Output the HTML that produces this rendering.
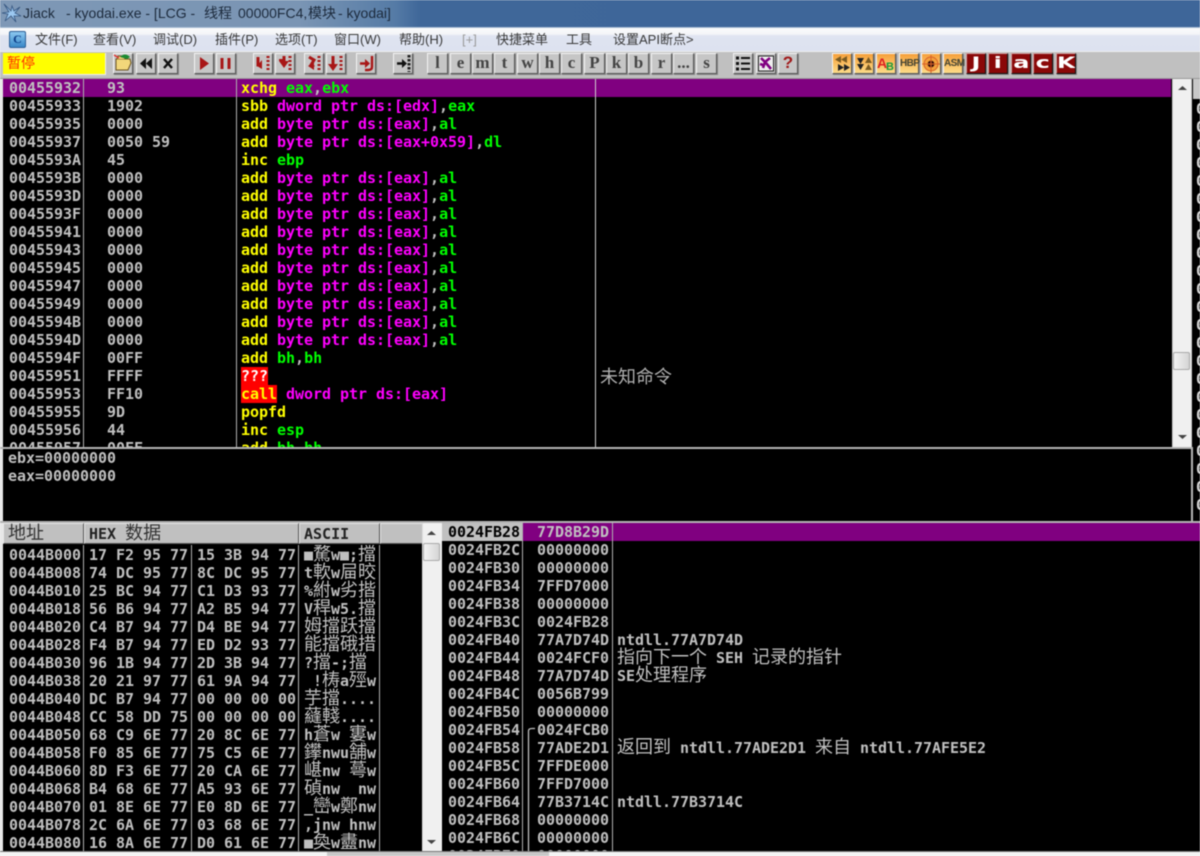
<!DOCTYPE html>
<html><head><meta charset="utf-8"><style>
*{margin:0;padding:0;box-sizing:border-box}
html,body{width:1200px;height:856px;overflow:hidden;background:#f0f0f0}
#w{position:absolute;left:0;top:0;width:1200px;height:856px;overflow:hidden;filter:blur(.45px)}
.a{position:absolute}
pre{position:absolute;font:bold 15px/18px "DejaVu Sans Mono","Liberation Mono",monospace;letter-spacing:-.03px;color:#c0c0c0;white-space:pre}
pre i{font:normal 18px/0 "Noto Sans CJK SC",sans-serif;letter-spacing:0}
.y{color:#ff0}.g{color:#0f0}.m{color:#f0f}
.t{position:absolute;top:3px;font:14px/20px "Liberation Sans","Noto Sans CJK SC",sans-serif;color:#1c2a3c;white-space:pre}
.n{position:absolute;top:31px;font:13px/18px "Liberation Sans","Noto Sans CJK SC",sans-serif;color:#3a3a3a;white-space:pre}
.b{position:absolute;top:53px;height:21px;background:#c6c6c6;border:1px solid;border-color:#f4f4f4 #555 #555 #f4f4f4;box-shadow:1px 1px 0 #888}
.l{width:21px;text-align:center;font:bold 17px/18px "Liberation Serif",serif;color:#444}
.o{width:20px;background:linear-gradient(#f6a03a,#fddc88);text-align:center;font:bold 10px/19px "Liberation Sans",sans-serif;letter-spacing:-.6px;color:#443}
.r{width:20px;background:#8a0808;border-color:#d0a0a0 #111 #111 #d0a0a0;text-align:center;font:900 16px/17px "DejaVu Sans",sans-serif;color:#fff;overflow:hidden}
.r span{display:inline-block;transform:scaleX(1.5)}
.h{position:absolute;top:523px;height:21px;background:#c0c0c0;border:1px solid;border-color:#e8e8e8 #555 #555 #e8e8e8;font:bold 15px/21px "DejaVu Sans Mono",monospace;color:#222;padding-left:4px;white-space:pre}
.h i{font:normal 18px/0 "Noto Sans CJK SC",sans-serif;color:#333}
.v{position:absolute;width:1px;background:#b0b0b0}
.c{font:normal 18px/18px "Noto Sans CJK SC",sans-serif;color:#b0b0b0;position:absolute;white-space:pre}
</style></head><body><div id="w">

<div class="a" style="left:0;top:0;width:1200px;height:27px;background:linear-gradient(90deg,#7e98b6 0,#7a95b4 300px,#557ba6 395px,#3f6799 420px,#3e6699 1200px)"></div>
<div class="a" style="left:0;top:27px;width:1200px;height:1px;background:#a8bdd4"></div>
<svg class="a" style="left:1px;top:2px" width="22" height="22" viewBox="0 0 22 22"><path d="M3 2 L10 9 L11 4 L13 9 L19 5 L14 11 L20 14 L13 14 L15 20 L10 14 L4 19 L7 12 L1 11 L8 10Z" fill="#9cc8f0" stroke="#35557f" stroke-width=".8"/></svg>
<div class="t" style="left:23px">Jiack</div>
<div class="t" style="left:66px">- kyodai.exe - [LCG -</div>
<div class="t" style="left:204px">线程</div>
<div class="t" style="left:238px">00000FC4,</div>
<div class="t" style="left:308px">模块</div>
<div class="t" style="left:338px">- kyodai]</div>

<div class="a" style="left:0;top:28px;width:1200px;height:23px;background:linear-gradient(#fbfbfc 0,#f4f5f8 6px,#dfe4f1 8px,#dde2f0 100%)"></div>
<div class="a" style="left:9px;top:31px;width:17px;height:17px;background:linear-gradient(#8cc8f0,#3a88c8);border:1px solid #2b5f96;border-radius:2px;color:#0d3f88;font:bold 12px/15px 'Liberation Serif',serif;text-align:center">C</div>
<div class="n" style="left:35px">文件(F)</div>
<div class="n" style="left:93px">查看(V)</div>
<div class="n" style="left:153px">调试(D)</div>
<div class="n" style="left:215px">插件(P)</div>
<div class="n" style="left:275px">选项(T)</div>
<div class="n" style="left:334px">窗口(W)</div>
<div class="n" style="left:399px">帮助(H)</div>
<div class="n" style="left:462px;color:#9a9a9a">[+]</div>
<div class="n" style="left:496px">快捷菜单</div>
<div class="n" style="left:566px">工具</div>
<div class="n" style="left:613px">设置API断点&gt;</div>

<div class="a" style="left:0;top:51px;width:1200px;height:28px;background:#c0c0c0;border-top:1px solid #eee"></div>
<div class="a" style="left:3px;top:53px;width:103px;height:22px;background:#ff0;border-right:1px solid #eee;border-bottom:1px solid #eee;color:#ff3000;font:14px/20px 'Noto Sans CJK SC',sans-serif;padding-left:4px">暂停</div>

<div class="b" style="left:113px;width:20px"></div>
<div class="b" style="left:136px;width:20px"></div>
<div class="b" style="left:158px;width:20px"></div>
<div class="b" style="left:194px;width:20px"></div>
<div class="b" style="left:216px;width:20px"></div>
<div class="b" style="left:253px;width:20px"></div>
<div class="b" style="left:275px;width:20px"></div>
<div class="b" style="left:304px;width:20px"></div>
<div class="b" style="left:326px;width:20px"></div>
<div class="b" style="left:356px;width:20px"></div>
<div class="b" style="left:393px;width:20px"></div>
<div class="b l" style="left:427px">l</div>
<div class="b l" style="left:450px">e</div>
<div class="b l" style="left:472px">m</div>
<div class="b l" style="left:494px">t</div>
<div class="b l" style="left:517px">w</div>
<div class="b l" style="left:539px">h</div>
<div class="b l" style="left:561px">c</div>
<div class="b l" style="left:584px">P</div>
<div class="b l" style="left:606px">k</div>
<div class="b l" style="left:628px">b</div>
<div class="b l" style="left:651px">r</div>
<div class="b l" style="left:673px">...</div>
<div class="b l" style="left:696px">s</div>
<div class="b" style="left:733px;width:20px"></div>
<div class="b" style="left:756px;width:20px"></div>
<div class="b l" style="left:778px;width:20px;color:#a01818;font:bold 17px/18px 'Liberation Sans',sans-serif">?</div>
<div class="b o" style="left:832px"></div>
<div class="b o" style="left:854px"></div>
<div class="b o" style="left:876px;font-size:14px;letter-spacing:0;color:#d22;text-align:left">A</div>
<div class="b o" style="left:899px">HBP</div>
<div class="b o" style="left:921px"></div>
<div class="b o" style="left:943px">ASM</div>
<div class="b r" style="left:966px"><span>J</span></div>
<div class="b r" style="left:988px"><span>i</span></div>
<div class="b r" style="left:1011px"><span>a</span></div>
<div class="b r" style="left:1033px"><span>c</span></div>
<div class="b r" style="left:1056px"><span>K</span></div>

<svg class="a" style="left:0;top:49px" width="1200" height="28" viewBox="0 50 1200 28">
<path d="M116 60 L130 60 L131 64 L128 71 L116 71Z" fill="#f2d77a" stroke="#6b5420"/>
<path d="M117 60 L118 57 L124 57 L125 60" fill="#f2d77a" stroke="#6b5420"/>
<path d="M120 58 Q125 53 130 58 L127 60Z" fill="#1b8a30"/><path d="M114 56 L119 59" stroke="#d33" stroke-width="1.4"/>
<path d="M146 59 V70 L140 64.500Z M152 59 V70 L146 64.500Z" fill="#111"/>
<path d="M164 60 L172 69 M172 60 L164 69" stroke="#111" stroke-width="2.400"/>
<path d="M200 58 V71 L209 64.500Z" fill="#a81616"/>
<path d="M222 59 V70 M229 59 V70" stroke="#a81616" stroke-width="3"/>
<g fill="none" stroke="#a81616">
<path d="M258 58 V66 H262" stroke-width="3"/><path d="M262 61 V70 L257 67 Z" fill="#a81616" stroke="none"/>
<path d="M268 57 V72" stroke-width="3" stroke-dasharray="2 2"/>
<path d="M284 57 V64" stroke-width="3"/><path d="M279 62 H289 L284 69Z" fill="#a81616" stroke="none"/><path d="M279 61 H284" stroke-width="2"/>
<path d="M290 57 V72" stroke-width="3" stroke-dasharray="2 2"/>
<path d="M309 58 L314 61 L311 66 L314 68" stroke-width="3"/><path d="M308 67 L314 63 V71Z" fill="#a81616" stroke="none"/>
<path d="M319 57 V72" stroke-width="3" stroke-dasharray="2 2"/>
<path d="M333 57 V67" stroke-width="3"/><path d="M328 65 H338 L333 72Z" fill="#a81616" stroke="none"/>
<path d="M341 57 V72" stroke-width="3" stroke-dasharray="2 2"/>
<path d="M360 64.500 H366" stroke-width="2.500"/><path d="M365 60 L370 64.500 L365 69Z" fill="#a81616" stroke="none"/>
<path d="M372 57 V68 Q372 71 368 71 H365" stroke-width="2.400"/>
</g>
<path d="M397 64.500 H403" stroke="#111" stroke-width="2.500"/><path d="M402 60 L407 64.500 L402 69Z" fill="#111"/>
<path d="M409 56 V73" stroke="#222" stroke-width="3" stroke-dasharray="2.500 1.500"/>
<path d="M736 59 H739 M736 64.500 H739 M736 70 H739" stroke="#111" stroke-width="3"/><path d="M741 59 H750 M741 64.500 H750 M741 70 H750" stroke="#111" stroke-width="2"/>
<rect x="758.500" y="57" width="15" height="15" fill="#eee" stroke="#222"/>
<path d="M761 59 L765 63 L770 59 M765 63 L763 69 M766 64 L771 70 M760 65 L763 66" stroke="#800080" stroke-width="2.600" fill="none"/>
<path d="M841 57 V64 L835 60.500Z M847 57 V64 L841 60.500Z" fill="#7a5b22"/><path d="M838 65 V72 L844 68.500Z M844 65 V72 L850 68.500Z" fill="#222"/>
<path d="M857 59 H864 L860.500 65Z M857 65 H864 L860.500 71Z" fill="#222"/><path d="M865 64 H872 L868.500 58Z M865 71 H872 L868.500 65Z" fill="#7a5b22"/>
<circle cx="931" cy="65" r="7" fill="#f3a03b" stroke="#d8622a"/><circle cx="931" cy="65" r="3.400" fill="#3a100a"/><path d="M931 56 V74 M922 65 H940" stroke="#d8622a"/>
</svg>
<div class="a" style="left:886px;top:62px;color:#1a9a3a;font:bold 11px/11px 'Liberation Sans',sans-serif">B</div>

<div class="a" style="left:0;top:78px;width:1200px;height:1px;background:#999"></div>
<div class="a" style="left:0;top:79px;width:3px;height:777px;background:#e8e8e8"></div>
<div class="a" style="left:3px;top:79px;width:1197px;height:773px;background:#000"></div>

<!-- CPU pane -->
<div class="a" style="left:3px;top:79px;width:1168px;height:18px;background:#800080"></div>
<div class="v" style="left:83px;top:79px;height:368px"></div>
<div class="v" style="left:236px;top:79px;height:368px"></div>
<div class="v" style="left:595px;top:79px;height:368px;background:#d0d0d0"></div>
<div class="a" style="left:241px;top:367px;width:27px;height:18px;background:#f00"></div>
<div class="a" style="left:241px;top:385px;width:36px;height:18px;background:#f00"></div>
<div class="a" style="left:0;top:79px;width:1171px;height:368px;overflow:hidden">
<pre style="left:9px;top:0">00455932
00455933
00455935
00455937
0045593A
0045593B
0045593D
0045593F
00455941
00455943
00455945
00455947
00455949
0045594B
0045594D
0045594F
00455951
00455953
00455955
00455956
00455957</pre>
<pre style="left:107px;top:0">93
1902
0000
0050 59
45
0000
0000
0000
0000
0000
0000
0000
0000
0000
0000
00FF
FFFF
FF10
9D
44
00FF</pre>
<pre style="left:241px;top:0"><span class="y">xchg</span> <span class="g">eax</span>,<span class="g">ebx</span>
<span class="y">sbb</span> <span class="m">dword ptr ds:[edx]</span>,<span class="g">eax</span>
<span class="y">add</span> <span class="m">byte ptr ds:[eax]</span>,<span class="g">al</span>
<span class="y">add</span> <span class="m">byte ptr ds:[eax+0x59]</span>,<span class="g">dl</span>
<span class="y">inc</span> <span class="g">ebp</span>
<span class="y">add</span> <span class="m">byte ptr ds:[eax]</span>,<span class="g">al</span>
<span class="y">add</span> <span class="m">byte ptr ds:[eax]</span>,<span class="g">al</span>
<span class="y">add</span> <span class="m">byte ptr ds:[eax]</span>,<span class="g">al</span>
<span class="y">add</span> <span class="m">byte ptr ds:[eax]</span>,<span class="g">al</span>
<span class="y">add</span> <span class="m">byte ptr ds:[eax]</span>,<span class="g">al</span>
<span class="y">add</span> <span class="m">byte ptr ds:[eax]</span>,<span class="g">al</span>
<span class="y">add</span> <span class="m">byte ptr ds:[eax]</span>,<span class="g">al</span>
<span class="y">add</span> <span class="m">byte ptr ds:[eax]</span>,<span class="g">al</span>
<span class="y">add</span> <span class="m">byte ptr ds:[eax]</span>,<span class="g">al</span>
<span class="y">add</span> <span class="m">byte ptr ds:[eax]</span>,<span class="g">al</span>
<span class="y">add</span> <span class="g">bh</span>,<span class="g">bh</span>
<span style="color:#fff">???</span>
<span class="y">call</span> <span class="m">dword ptr ds:[eax]</span>
<span class="y">popfd</span>
<span class="y">inc</span> <span class="g">esp</span>
<span class="y">add</span> <span class="g">bh</span>,<span class="g">bh</span></pre>
</div>
<div class="c" style="left:600px;top:367px">未知命令</div>

<!-- CPU scrollbar -->
<div class="a" style="left:1172px;top:79px;width:20px;height:369px;background:#f0f0f0;border-left:1px solid #ccc;border-right:1px solid #ccc"></div>
<div class="a" style="left:1173px;top:352px;width:17px;height:18px;background:linear-gradient(90deg,#f4f4f4,#d4d4d4);border:1px solid #aaa;border-radius:2px"></div>
<svg class="a" style="left:1172px;top:84px" width="20" height="8"><path d="M6 6 H15 L10.500 2Z" fill="#444"/></svg>
<svg class="a" style="left:1172px;top:433px" width="20" height="8"><path d="M6 2 H15 L10.500 6Z" fill="#444"/></svg>
<div class="a" style="left:1193px;top:79px;width:7px;height:20px;background:#c8c8c8"></div>
<pre style="left:1196px;top:100px;color:#d8d8d8">0
0
0
0
0
0
0
0
0
0
0
0
0
0
0
0
0
0
0
0
0
0
0</pre>

<!-- Info pane -->
<div class="a" style="left:0;top:447px;width:1192px;height:2px;background:#b4b4b4"></div>
<div class="a" style="left:1191px;top:447px;width:2px;height:75px;background:#b4b4b4"></div>
<pre style="left:8px;top:449px">ebx=00000000
eax=00000000</pre>
<div class="a" style="left:0;top:521px;width:1200px;height:2px;background:#b4b4b4"></div>

<!-- Hex pane -->
<div class="h" style="left:3px;width:81px;padding-left:4px;color:#333"><i>地址</i></div>
<div class="h" style="left:84px;width:215px">HEX <i>数据</i></div>
<div class="h" style="left:299px;width:81px">ASCII</div>
<div class="h" style="left:380px;width:42px;border-right:0"></div>
<div class="v" style="left:83px;top:545px;height:306px"></div>
<div class="v" style="left:191px;top:545px;height:306px"></div>
<div class="v" style="left:298px;top:545px;height:306px"></div>
<div class="v" style="left:379px;top:545px;height:306px"></div>
<div class="a" style="left:0;top:545px;width:422px;height:306px;overflow:hidden">
<pre style="left:9px;top:1px">0044B000
0044B008
0044B010
0044B018
0044B020
0044B028
0044B030
0044B038
0044B040
0044B048
0044B050
0044B058
0044B060
0044B068
0044B070
0044B078
0044B080</pre>
<pre style="left:89px;top:1px">17 F2 95 77
74 DC 95 77
25 BC 94 77
56 B6 94 77
C4 B7 94 77
F4 B7 94 77
96 1B 94 77
20 21 97 77
DC B7 94 77
CC 58 DD 75
68 C9 6E 77
F0 85 6E 77
8D F3 6E 77
B4 68 6E 77
01 8E 6E 77
2C 6A 6E 77
16 8A 6E 77</pre>
<pre style="left:197px;top:1px">15 3B 94 77
8C DC 95 77
C1 D3 93 77
A2 B5 94 77
D4 BE 94 77
ED D2 93 77
2D 3B 94 77
61 9A 94 77
00 00 00 00
00 00 00 00
20 8C 6E 77
75 C5 6E 77
20 CA 6E 77
A5 93 6E 77
E0 8D 6E 77
03 68 6E 77
D0 61 6E 77</pre>
<pre style="left:304px;top:1px">■<i>騖</i>w■;<i>擋</i>
t<i>軟</i>w<i>屇晈</i>
%<i>紨</i>w<i>劣揩</i>
V<i>稈</i>w5.<i>擋</i>
<i>姆擋跃擋</i>
<i>能擋硪措</i>
?<i>擋</i>-;<i>擋</i>
 !<i>梼</i>a<i>殌</i>w
<i>芋擋</i>....
<i>蘕輚</i>....
h<i>蒼</i>w <i>寠</i>w
<i>鑻</i>nwu<i>舗</i>w
<i>嵁</i>nw <i>蕚</i>w
<i>碵</i>nw  nw
_<i>巒</i>w<i>鄭</i>nw
,jnw hnw
■<i>奐</i>w<i>衋</i>nw</pre>
</div>
<div class="a" style="left:422px;top:523px;width:20px;height:329px;background:#f0f0f0;border-left:1px solid #ddd"></div>
<div class="a" style="left:423px;top:543px;width:17px;height:18px;background:linear-gradient(90deg,#f4f4f4,#d4d4d4);border:1px solid #aaa;border-radius:2px"></div>
<svg class="a" style="left:422px;top:529px" width="20" height="8"><path d="M5 6 H14 L9.500 2Z" fill="#444"/></svg>
<svg class="a" style="left:422px;top:838px" width="20" height="8"><path d="M5 2 H14 L9.500 6Z" fill="#444"/></svg>

<!-- Stack pane -->
<div class="a" style="left:442px;top:523px;width:80px;height:18px;background:#c0c0c0"></div>
<div class="a" style="left:523px;top:523px;width:677px;height:18px;background:#800080"></div>
<div class="v" style="left:522px;top:523px;height:328px"></div>
<div class="v" style="left:612px;top:523px;height:328px"></div>
<svg class="a" style="left:524px;top:725px" width="12" height="127"><path d="M4.500 127 V6 Q4.500 3.500 8 3.500 H11" stroke="#c0c0c0" fill="none" stroke-width="1.300"/></svg>
<div class="a" style="left:442px;top:523px;width:758px;height:328px;overflow:hidden">
<pre style="left:6px;top:0"><span style="color:#000">0024FB28</span>
0024FB2C
0024FB30
0024FB34
0024FB38
0024FB3C
0024FB40
0024FB44
0024FB48
0024FB4C
0024FB50
0024FB54
0024FB58
0024FB5C
0024FB60
0024FB64
0024FB68
0024FB6C
0024FB70</pre>
<pre style="left:95px;top:0">77D8B29D
00000000
00000000
7FFD7000
00000000
0024FB28
77A7D74D
0024FCF0
77A7D74D
0056B799
00000000
0024FCB0
77ADE2D1
7FFDE000
7FFD7000
77B3714C
00000000
00000000
00000000</pre>
<pre style="left:175px;top:108px">ntdll.77A7D74D
<i>指向下一个</i> SEH <i>记录的指针</i>
SE<i>处理程序</i>



<i>返回到</i> ntdll.77ADE2D1 <i>来自</i> ntdll.77AFE5E2


ntdll.77B3714C</pre>
</div>

<!-- Bottom bar -->
<div class="a" style="left:0;top:851px;width:1200px;height:1px;background:#777"></div>
<div class="a" style="left:0;top:852px;width:1200px;height:4px;background:#f4f4f4"></div>
<div class="a" style="left:327px;top:852px;width:222px;height:4px;background:#c8c8c8"></div>
</div></body></html>
